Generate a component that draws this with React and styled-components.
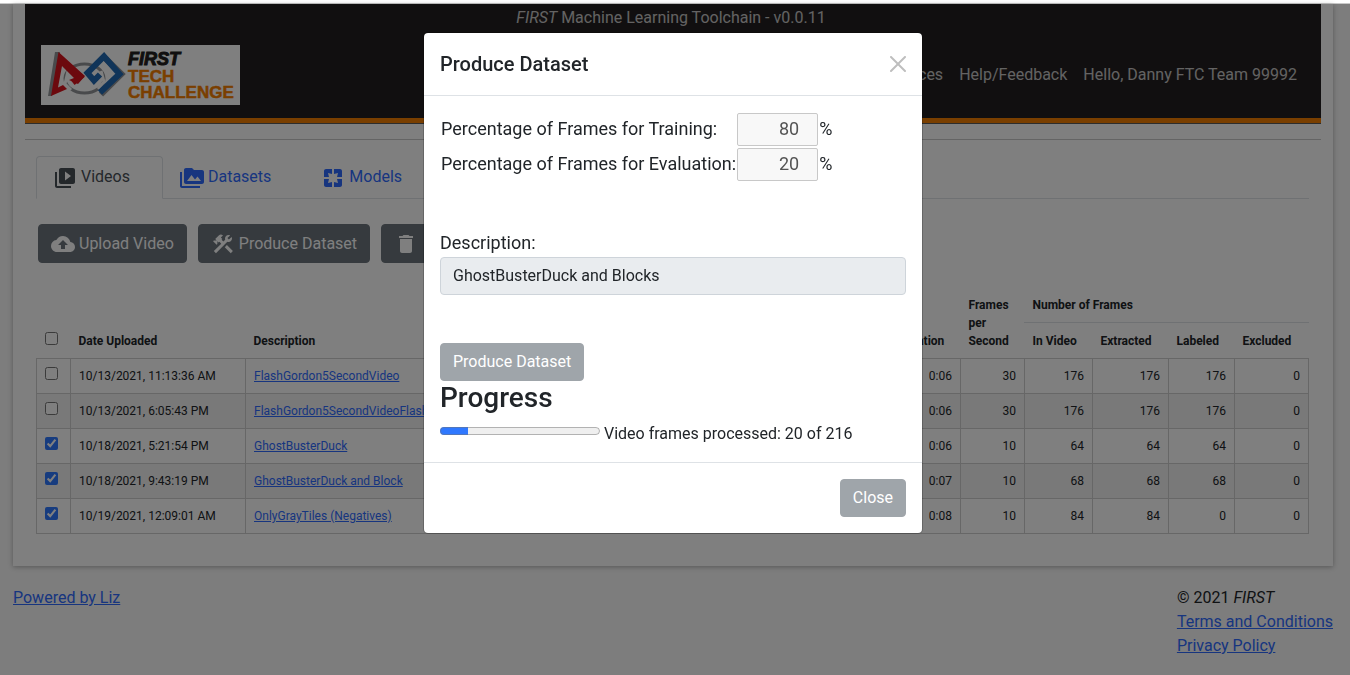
import React from 'react';
import styled, { createGlobalStyle, css } from 'styled-components';
import {
  MdVideoLibrary,
  MdPermMedia,
  MdPages,
  MdBackup,
  MdConstruction,
  MdDelete,
} from 'react-icons/md';

const GlobalStyle = createGlobalStyle`
  *, *::before, *::after { box-sizing: border-box; }
  body {
    margin: 0;
    background: #fafafa;
    color: #212529;
    font-family: Roboto, "Liberation Sans", sans-serif;
    font-size: 16px;
    line-height: 24px;
    overflow: hidden;
  }
  button, input { font: inherit; }
  a { color: #2f6bff; }
`;

const TopStrip = styled.div`
  height: 4px;
  background: #fff;
  border-bottom: 1px solid #c8c8c8;
`;

const Page = styled.div`
  padding: 0 17px 0 13px;
`;

const Card = styled.main`
  background: #fff;
  padding: 0 12px 32px;
  box-shadow: 0 1px 5px rgba(0, 0, 0, 0.3);
`;

const Header = styled.header`
  background: #231f20;
  color: rgba(255, 255, 255, 0.75);
  border-bottom: 1px solid #5a5a5a;
`;

const AppTitle = styled.div`
  padding: 2px 4px 0 0;
  text-align: center;
`;

const NavBar = styled.div`
  display: flex;
  align-items: center;
  justify-content: space-between;
  padding: 15px 24px 13px 16px;
  border-bottom: 5px solid #f57e00;
`;

const Nav = styled.nav`
  display: flex;
  gap: 16px;
`;

const NavLink = styled.a`
  color: inherit;
  text-decoration: none;
`;

const LogoSvg = styled.svg`
  display: block;
  width: 199px;
  height: 60px;
  background: #fff;
`;

const Rule = styled.hr`
  margin: 15px 0 16px;
  border: 0;
  border-top: 1px solid #c8c8c8;
`;

const Content = styled.section`
  padding: 0 12px 0 11px;
`;

const Tabs = styled.nav`
  display: flex;
  border-bottom: 1px solid #dee2e6;
`;

const Tab = styled.a`
  display: flex;
  align-items: center;
  gap: 4px;
  height: 43px;
  margin-bottom: -1px;
  padding: 0 32px 2px 16px;
  border: 1px solid transparent;
  border-radius: 4px 4px 0 0;
  text-decoration: none;
  ${(p) =>
    p.$active &&
    css`
      color: #495057;
      background: #fff;
      border-color: #dee2e6 #dee2e6 #fff;
    `}
  svg { width: 24px; height: 24px; margin-top: 2px; }
`;

const Toolbar = styled.div`
  display: flex;
  gap: 11px;
  padding: 25px 2px;
`;

const Button = styled.button`
  display: flex;
  align-items: center;
  gap: 4px;
  padding: 6px 12px;
  border: 1px solid #6c757d;
  border-radius: 4px;
  background: #6c757d;
  color: #fff;
  line-height: 24px;
  &:disabled { opacity: 0.65; }
`;

const ToolButton = styled(Button)`
  height: 39px;
  svg { width: 24px; height: 24px; }
`;

const Table = styled.table`
  width: 100%;
  table-layout: fixed;
  border-collapse: collapse;
  font-size: 12px;
  line-height: 18px;
  tbody tr:nth-child(even) { background: #f2f2f2; }
`;

const Col = styled.col`
  width: ${(p) => (p.$w ? `${p.$w}px` : 'auto')};
`;

const Th = styled.th`
  padding: 8px;
  text-align: left;
  vertical-align: bottom;
  font-weight: 700;
  ${(p) => p.$ruled && 'border-bottom: 1px solid #dee2e6;'}
`;

const Td = styled.td`
  padding: 8px;
  border: 1px solid #cfcfcf;
  text-align: ${(p) => (p.$num ? 'right' : 'left')};
  white-space: nowrap;
  overflow: hidden;
`;

const Check = styled.input`
  display: block;
  width: 13px;
  height: 13px;
  margin: 0 0 5px;
  accent-color: #2f78ff;
`;

const Footer = styled.footer`
  display: flex;
  justify-content: space-between;
  padding-top: 20px;
`;

const Legal = styled.div`
  display: flex;
  flex-direction: column;
`;

const Backdrop = styled.div`
  position: fixed;
  inset: 4px 0 0;
  display: flex;
  justify-content: center;
  align-items: flex-start;
  padding: 28px 4px 0 0;
  background: rgba(0, 0, 0, 0.5);
`;

const Dialog = styled.div`
  width: 100%;
  max-width: 500px;
  background: #fff;
  background-clip: padding-box;
  border: 1px solid rgba(0, 0, 0, 0.2);
  border-radius: 5px;
`;

const DialogHeader = styled.div`
  display: flex;
  align-items: center;
  justify-content: space-between;
  padding: 16px;
  border-bottom: 1px solid #dee2e6;
`;

const DialogTitle = styled.h2`
  margin: 0;
  font-size: 20px;
  font-weight: 500;
  line-height: 30px;
`;

const CloseIcon = styled.button`
  display: block;
  padding: 0;
  border: 0;
  background: none;
  color: #000;
  opacity: 0.25;
  svg { display: block; width: 16px; height: 16px; }
`;

const DialogBody = styled.div`
  padding: 16px;
`;

const Split = styled.div`
  display: grid;
  grid-template-columns: max-content 81px max-content;
  column-gap: 1px;
  row-gap: 2px;
  padding: 1px;
  margin-bottom: 48px;
  font-size: 18px;
  line-height: 31px;
`;

const Percent = styled.input`
  width: 100%;
  height: 33px;
  padding: 1px 3px 3px 2px;
  border: 1px solid #c8c8c8;
  border-radius: 2px;
  background: #f8f8f8;
  color: #545454;
  text-align: right;
`;

const FieldLabel = styled.label`
  display: block;
  padding-bottom: 2px;
  font-size: 18px;
  line-height: 25px;
`;

const TextField = styled.input`
  display: block;
  width: 100%;
  height: 38px;
  margin-bottom: 48px;
  padding: 5px 12px 7px;
  border: 1px solid #ced4da;
  border-radius: 4px;
  background: #e9ecef;
  color: #212529;
`;

const ProgressTitle = styled.h3`
  margin: 0 0 8px;
  font-size: 28px;
  font-weight: 500;
  line-height: 33px;
`;

const ProgressLine = styled.div`
  height: 24px;
  progress { width: 160px; vertical-align: baseline; accent-color: #2f78ff; }
`;

const DialogFooter = styled.div`
  display: flex;
  justify-content: flex-end;
  padding: 16px;
  border-top: 1px solid #dee2e6;
`;

function Logo() {
  return (
    <LogoSvg viewBox="0 0 199 60" role="img" aria-label="FIRST Tech Challenge">
      <path d="M14 7h5l-8 44H7z" fill="#939598" />
      <ellipse cx="43.500" cy="33.500" rx="19.500" ry="14.500" fill="#fff" stroke="#939598" strokeWidth="3" />
      <path d="M27 26l-3 13 6 6M60 26l3 11-6 7" fill="none" stroke="#fff" strokeWidth="3" />
      <path d="M60 49.500l20.500-20.500L65 14" fill="none" stroke="#939598" strokeWidth="6" />
      <path d="M17.500 7L44 31l-7 8-9-4 5-2-12-12-4 21.500 5-2.500 4 4-16 7z" fill="#d9121c" />
      <path d="M32 38l10-8" stroke="#d9121c" strokeWidth="5" />
      <path d="M59 47.500L78.500 29 63 11.500 46.500 28l6.500 7.500 6-6" fill="none" stroke="#2168b2" strokeWidth="6" />
      <g fontFamily="Liberation Sans" fontWeight="700">
        <text x="87" y="20" fontSize="18" fontStyle="italic" fill="#231f20" stroke="#231f20" strokeWidth="1">FIRST</text>
        <text x="87" y="37" fontSize="17" fill="#f57e00" stroke="#f57e00" strokeWidth="0.500">TECH</text>
        <text x="87" y="53" fontSize="17" fill="#f57e00" stroke="#f57e00" strokeWidth="0.500">CHALLENGE</text>
      </g>
    </LogoSvg>
  );
}

const videos = [
  { date: '10/13/2021, 11:13:36 AM', name: 'FlashGordon5SecondVideo', time: '0:06', fps: 30, counts: [176, 176, 176, 0] },
  { date: '10/13/2021, 6:05:43 PM', name: 'FlashGordon5SecondVideoFlash', time: '0:06', fps: 30, counts: [176, 176, 176, 0] },
  { date: '10/18/2021, 5:21:54 PM', name: 'GhostBusterDuck', time: '0:06', fps: 10, counts: [64, 64, 64, 0], on: true },
  { date: '10/18/2021, 9:43:19 PM', name: 'GhostBusterDuck and Block', time: '0:07', fps: 10, counts: [68, 68, 68, 0], on: true },
  { date: '10/19/2021, 12:09:01 AM', name: 'OnlyGrayTiles (Negatives)', time: '0:08', fps: 10, counts: [84, 84, 0, 0], on: true },
];

const columnWidths = [34, 175, null, 70, 64, 68, 76, 66, 74];

function VideoTable() {
  return (
    <Table>
      <colgroup>
        {columnWidths.map((w, i) => <Col key={i} $w={w} />)}
      </colgroup>
      <thead>
        <tr>
          <Th rowSpan={2}><Check type="checkbox" aria-label="Select all videos" /></Th>
          <Th rowSpan={2}>Date Uploaded</Th>
          <Th rowSpan={2}>Description</Th>
          <Th rowSpan={2}>Duration</Th>
          <Th rowSpan={2}>Frames per Second</Th>
          <Th colSpan={4} $ruled>Number of Frames</Th>
        </tr>
        <tr>
          <Th>In Video</Th>
          <Th>Extracted</Th>
          <Th>Labeled</Th>
          <Th>Excluded</Th>
        </tr>
      </thead>
      <tbody>
        {videos.map((v) => (
          <tr key={v.date}>
            <Td><Check type="checkbox" defaultChecked={v.on} aria-label={`Select ${v.name}`} /></Td>
            <Td>{v.date}</Td>
            <Td><a href="#video">{v.name}</a></Td>
            <Td $num>{v.time}</Td>
            <Td $num>{v.fps}</Td>
            {v.counts.map((n, i) => <Td $num key={i}>{n}</Td>)}
          </tr>
        ))}
      </tbody>
    </Table>
  );
}

function ProduceDatasetDialog() {
  return (
    <Backdrop>
      <Dialog role="dialog" aria-modal="true" aria-labelledby="dialog-title">
        <DialogHeader>
          <DialogTitle id="dialog-title">Produce Dataset</DialogTitle>
          <CloseIcon type="button" aria-label="Close dialog" disabled>
            <svg viewBox="0 0 16 16" fill="currentColor">
              <path d="M.293.293a1 1 0 011.414 0L8 6.586 14.293.293a1 1 0 111.414 1.414L9.414 8l6.293 6.293a1 1 0 01-1.414 1.414L8 9.414l-6.293 6.293a1 1 0 01-1.414-1.414L6.586 8 .293 1.707a1 1 0 010-1.414z" />
            </svg>
          </CloseIcon>
        </DialogHeader>
        <DialogBody>
          <Split>
            <label htmlFor="training">Percentage of Frames for Training:</label>
            <Percent id="training" type="number" defaultValue={80} disabled />
            <span>%</span>
            <label htmlFor="evaluation">Percentage of Frames for Evaluation:</label>
            <Percent id="evaluation" type="number" defaultValue={20} disabled />
            <span>%</span>
          </Split>
          <FieldLabel htmlFor="description">Description:</FieldLabel>
          <TextField id="description" type="text" defaultValue="GhostBusterDuck and Blocks" disabled />
          <Button type="button" disabled>Produce Dataset</Button>
          <ProgressTitle>Progress</ProgressTitle>
          <ProgressLine>
            <progress id="frames" value={38} max={216} />{' '}
            <label htmlFor="frames">Video frames processed: 20 of 216</label>
          </ProgressLine>
        </DialogBody>
        <DialogFooter>
          <Button type="button" disabled>Close</Button>
        </DialogFooter>
      </Dialog>
    </Backdrop>
  );
}

export default function App() {
  return (
    <>
      <GlobalStyle />
      <TopStrip />
      <Page>
        <Card>
          <Header>
            <AppTitle><i>FIRST</i> Machine Learning Toolchain - v0.0.11</AppTitle>
            <NavBar>
              <Logo />
              <Nav>
                <NavLink href="#resources">Resources</NavLink>
                <NavLink href="#help">Help/Feedback</NavLink>
                <NavLink href="#account">Hello, Danny FTC Team 99992</NavLink>
              </Nav>
            </NavBar>
          </Header>
          <Rule />
          <Content>
            <Tabs>
              <Tab href="#videos" $active><MdVideoLibrary />Videos</Tab>
              <Tab href="#datasets"><MdPermMedia />Datasets</Tab>
              <Tab href="#models"><MdPages />Models</Tab>
            </Tabs>
            <Toolbar>
              <ToolButton type="button"><MdBackup />Upload Video</ToolButton>
              <ToolButton type="button"><MdConstruction />Produce Dataset</ToolButton>
              <ToolButton type="button" aria-label="Delete videos"><MdDelete /></ToolButton>
            </Toolbar>
            <VideoTable />
          </Content>
        </Card>
        <Footer>
          <div><a href="#liz">Powered by Liz</a></div>
          <Legal>
            <span>© 2021 <i>FIRST</i></span>
            <a href="#terms">Terms and Conditions</a>
            <a href="#privacy">Privacy Policy</a>
          </Legal>
        </Footer>
      </Page>
      <ProduceDatasetDialog />
    </>
  );
}
